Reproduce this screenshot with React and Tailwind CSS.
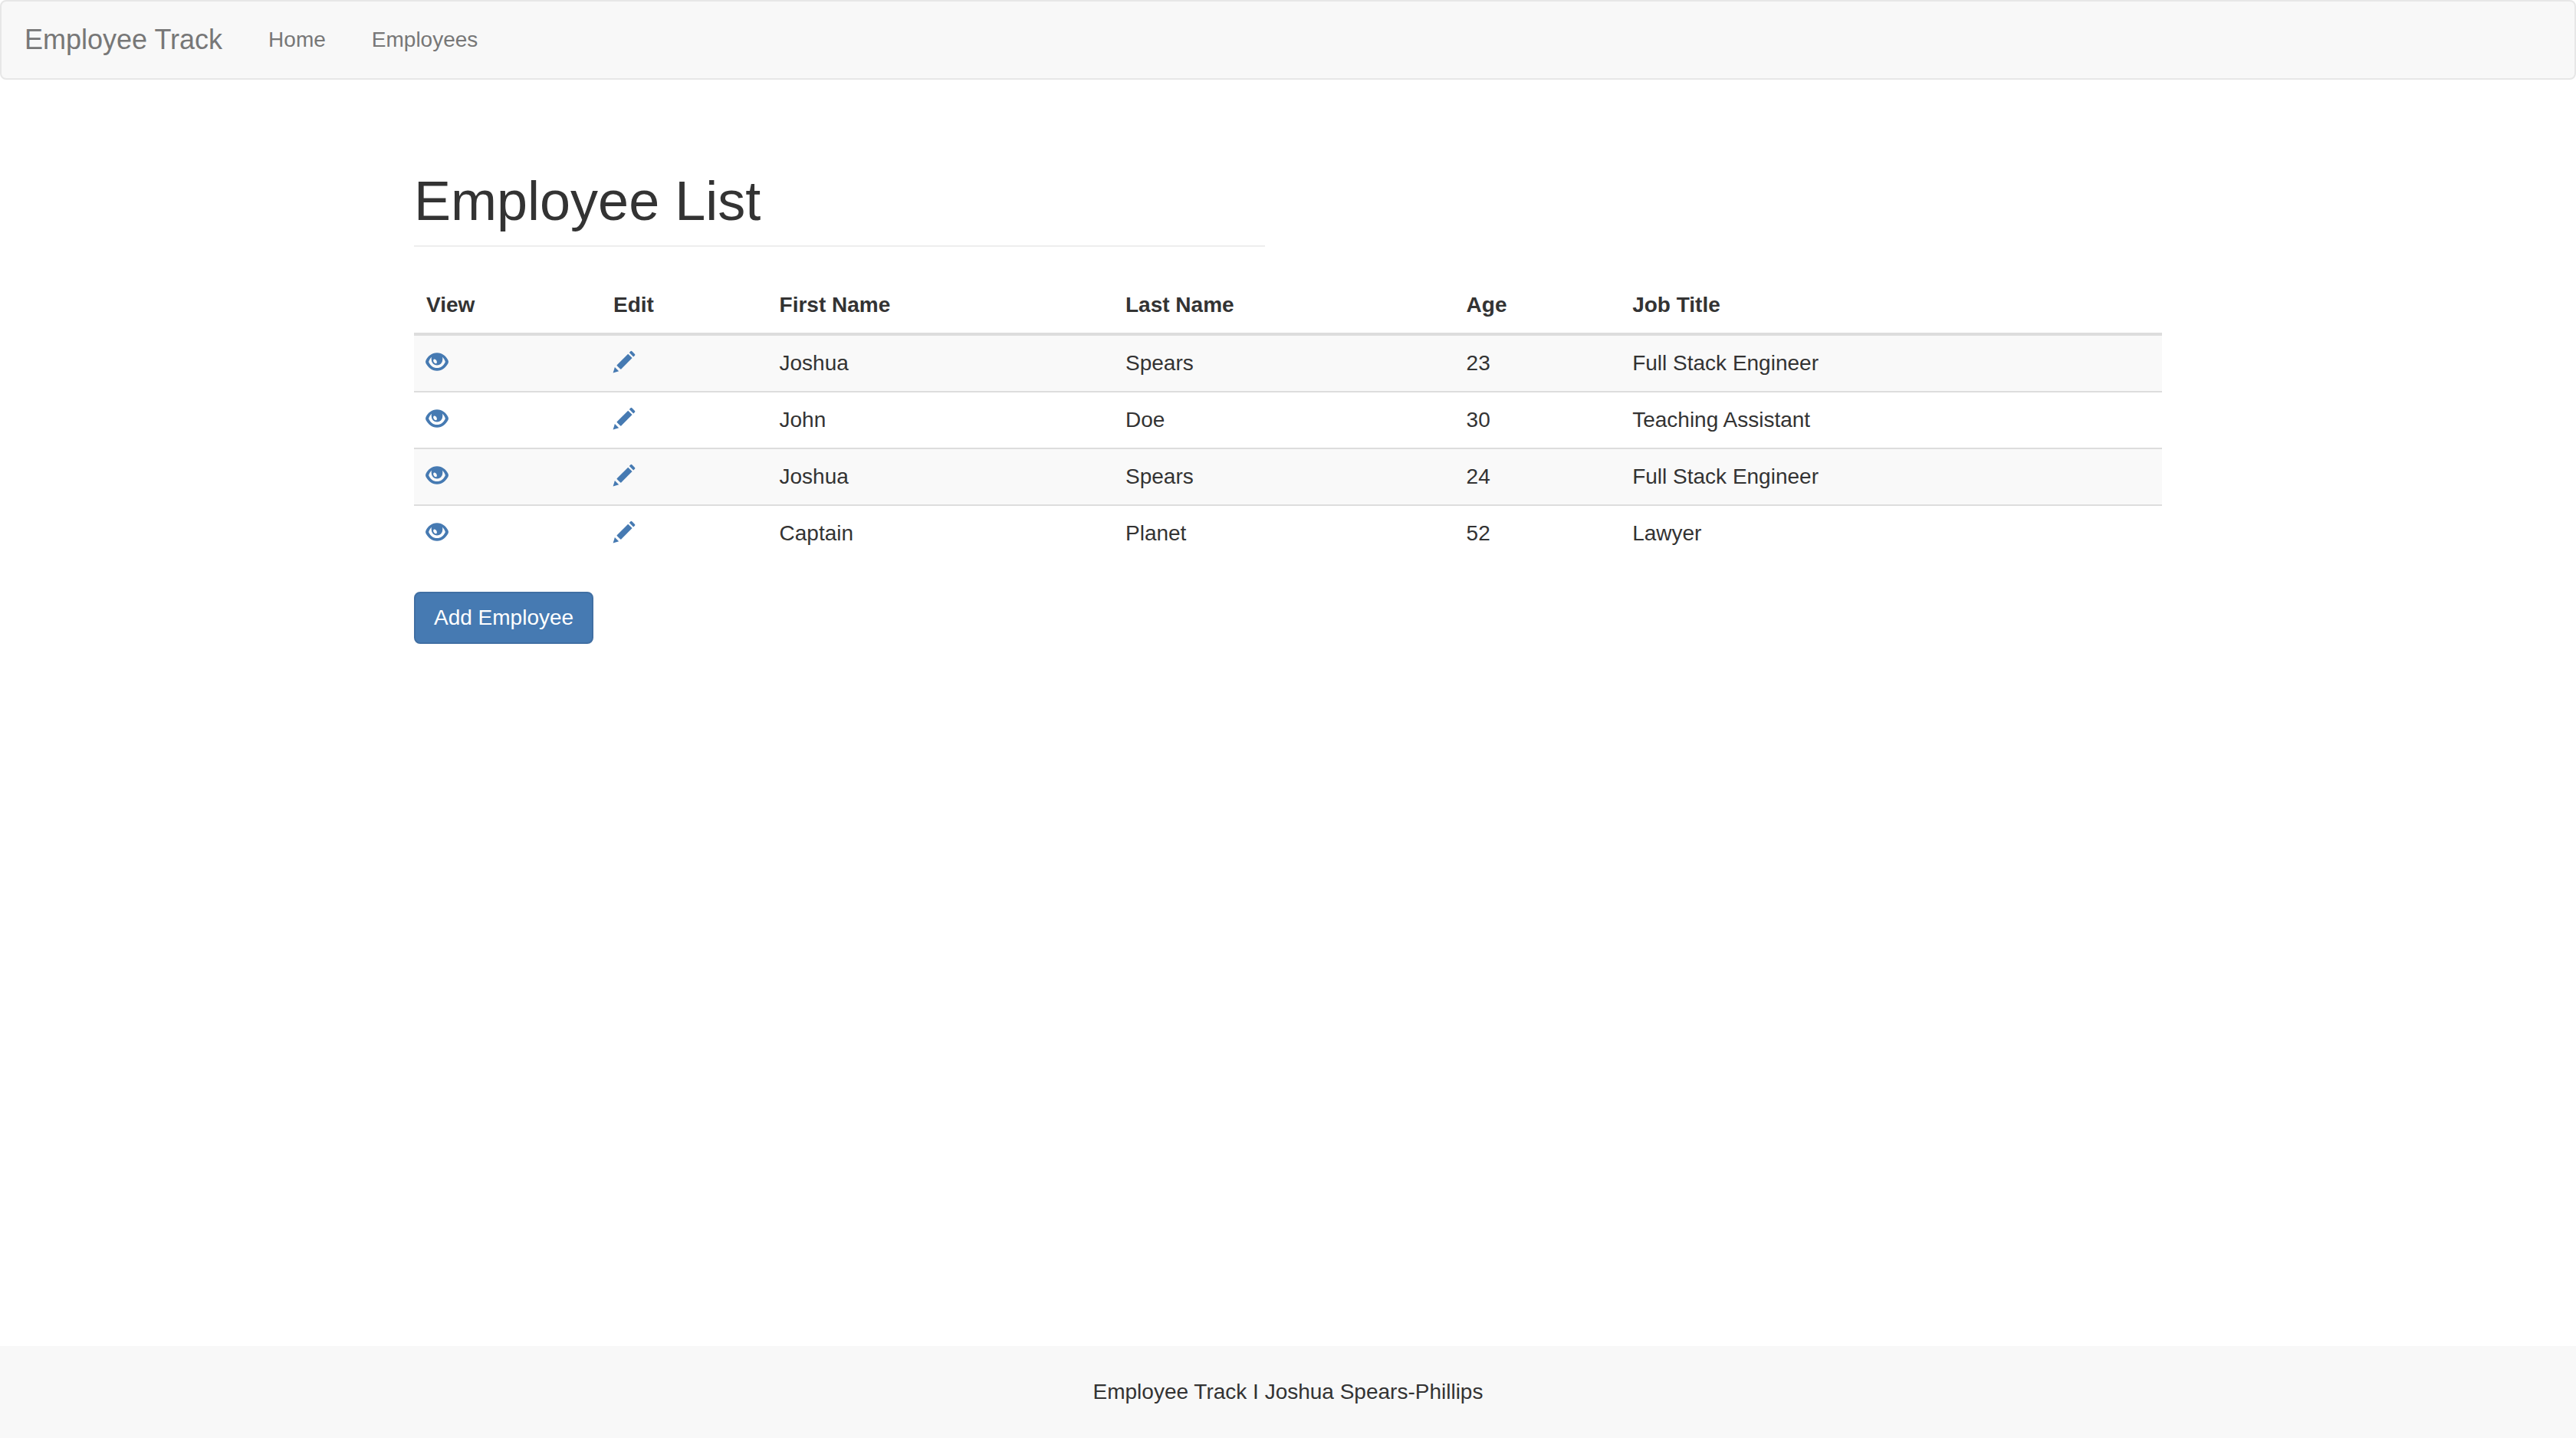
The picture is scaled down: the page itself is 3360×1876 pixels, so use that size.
const employees = [
  { first: "Joshua", last: "Spears", age: 23, title: "Full Stack Engineer" },
  { first: "John", last: "Doe", age: 30, title: "Teaching Assistant" },
  { first: "Joshua", last: "Spears", age: 24, title: "Full Stack Engineer" },
  { first: "Captain", last: "Planet", age: 52, title: "Lawyer" },
];

const columns = [
  { name: "View", width: "w-[10.7%]" },
  { name: "Edit", width: "w-[9.5%]" },
  { name: "First Name", width: "w-[19.8%]" },
  { name: "Last Name", width: "w-[19.5%]" },
  { name: "Age", width: "w-[9.5%]" },
  { name: "Job Title", width: "w-auto" },
];

function EyeIcon() {
  return (
    <svg viewBox="0 0 28 28" className="size-7 overflow-visible" fill="currentColor" aria-hidden="true">
      <path
        fillRule="evenodd"
        d="M14 2.200C21 2.200 25.900 6.700 28.500 12Q29.500 14 28.500 16C25.900 21 21 25.700 14 25.700S2.100 21 -0.500 16Q-1.500 14 -0.500 12C2.100 6.700 7 2.200 14 2.200ZM7 7.700C5.300 9.300 4.200 11.200 3.400 13.200Q3 14 3.400 14.700C5.600 18.800 9 22.100 14 22.100S22.400 18.800 24.600 14.700Q25 14 24.600 13.200C23.800 11.200 22.700 9.300 21 7.700A7.500 7.500 0 0 1 21.200 11.400A7.200 7.200 0 0 1 6.800 11.400A7.500 7.500 0 0 1 7 7.700ZM9.900 10.700C8.800 11.300 9 13 9.900 14.500S12.400 16.600 13.300 15.900S14 13.700 13.200 12.300S10.900 10.100 9.900 10.700Z"
      />
    </svg>
  );
}

function PencilIcon() {
  return (
    <svg viewBox="0 0 28 28" className="size-7 overflow-visible" fill="currentColor" aria-hidden="true">
      <path d="M22.500 0.300Q23.400 -0.600 24.300 0.300L28 4Q28.900 4.900 28 5.800L26.200 7.500L20.800 2.100Z" />
      <path d="M19.200 3.700L24.600 9.100L10 23.700L9.200 23.600L4.600 19L4.600 18.300Z" />
      <path d="M1.900 21L7.200 26.200L-0.400 28.400Z" />
    </svg>
  );
}

function Navbar() {
  return (
    <nav className="flex items-center rounded-lg border-2 border-[#e7e7e7] bg-[#f8f8f8] text-[#777]">
      <a href="#home" className="p-[30px] text-[36px] leading-10">Employee Track</a>
      <a href="#home" className="p-[30px] leading-10">Home</a>
      <a href="#employees" className="p-[30px] leading-10">Employees</a>
    </nav>
  );
}

function EmployeeTable() {
  return (
    <table className="mb-10 w-full table-fixed border-collapse text-left">
      <thead>
        <tr>
          {columns.map(({ name, width }) => (
            <th key={name} scope="col" className={`${width} border-b-4 border-[#ddd] p-4 font-bold`}>{name}</th>
          ))}
        </tr>
      </thead>
      <tbody>
        {employees.map((person, index) => (
          <tr key={index} className="odd:bg-[#f9f9f9] [&>td]:border-t-2 [&>td]:border-[#ddd] [&>td]:p-4">
            <td>
              <a href="#view" aria-label={`View ${person.first} ${person.last}`} className="flex h-10 w-7 pt-1 text-[#467ab2]">
                <EyeIcon />
              </a>
            </td>
            <td>
              <a href="#edit" aria-label={`Edit ${person.first} ${person.last}`} className="flex h-10 w-7 pt-1 text-[#467ab2]">
                <PencilIcon />
              </a>
            </td>
            <td>{person.first}</td>
            <td>{person.last}</td>
            <td>{person.age}</td>
            <td>{person.title}</td>
          </tr>
        ))}
      </tbody>
    </table>
  );
}

export default function App() {
  return (
    <div className="flex min-h-screen flex-col bg-white font-['Liberation_Sans',Arial,sans-serif] text-[28px] leading-10 text-[#333]">
      <Navbar />
      <main className="mx-auto w-full max-w-[2340px] px-[30px] pt-[118px] pb-20">
        <div className="mb-10 grid grid-cols-2 gap-[60px]">
          <h1 className="border-b-2 border-[#eee] pb-[18px] text-[72px] leading-[80px] font-light">Employee List</h1>
        </div>
        <EmployeeTable />
        <button type="button" className="rounded-lg border-2 border-[#406fa3] bg-[#467ab2] px-6 py-3 text-white">
          Add Employee
        </button>
      </main>
      <footer className="mt-auto bg-[#f8f8f8] p-10 text-center">Employee Track I Joshua Spears-Phillips</footer>
    </div>
  );
}
